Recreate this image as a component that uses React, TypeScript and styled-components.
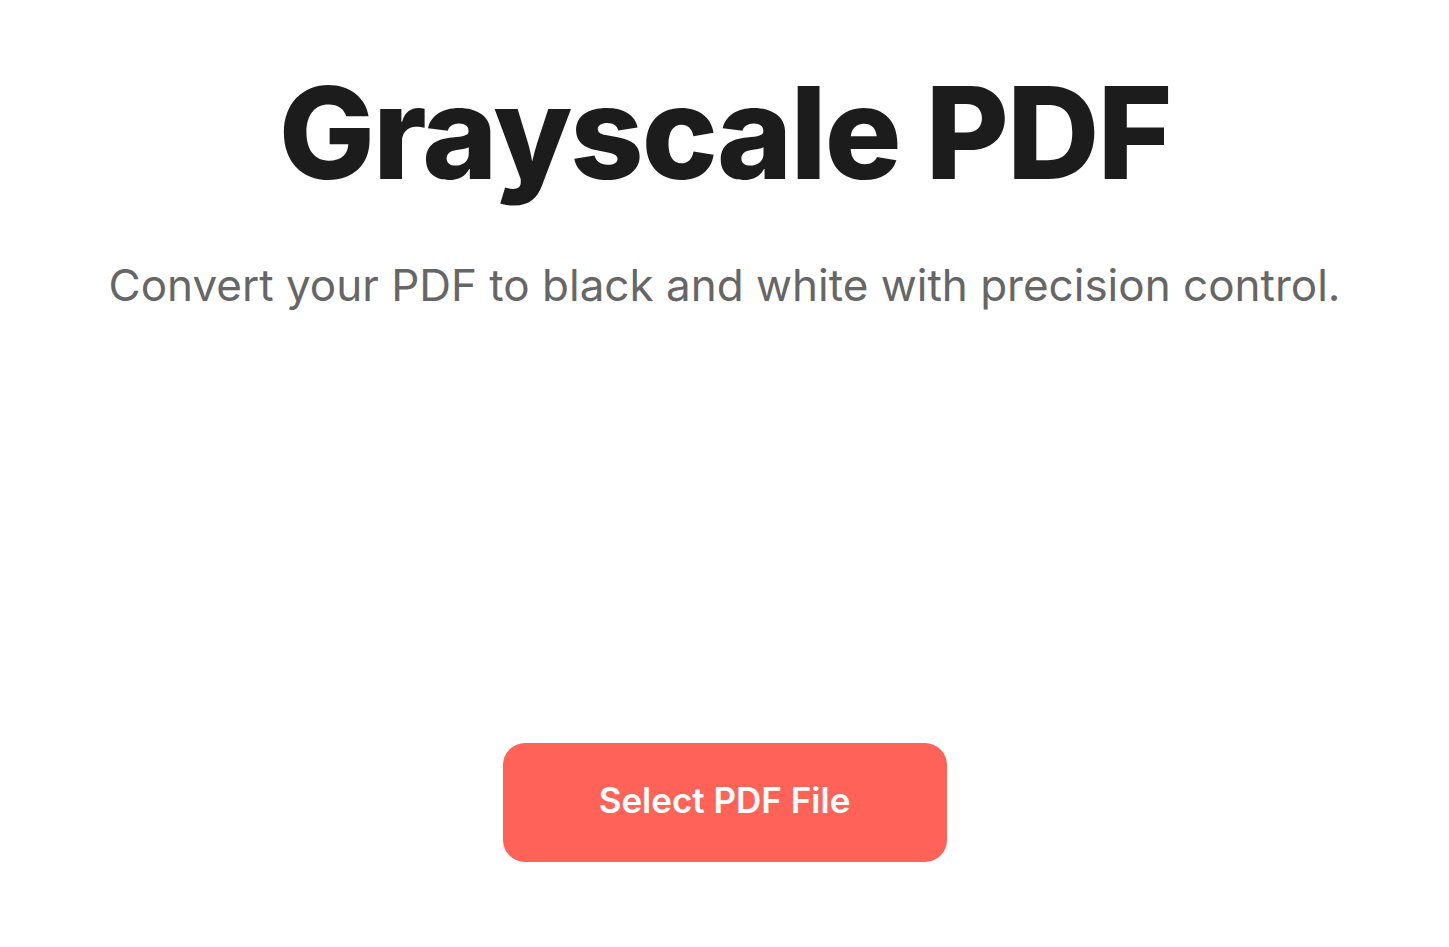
import styled, { createGlobalStyle } from "styled-components";

const GlobalStyle = createGlobalStyle`
  html, body {
    margin: 0;
    padding: 0;
    background: #ffffff;
  }

  body {
    font-family: Inter, "Noto Sans", sans-serif;
  }
`;

const Page = styled.main`
  display: flex;
  flex-direction: column;
  align-items: center;
  padding-top: 56px;
`;

const Title = styled.h1`
  margin: 0;
  font-size: 128px;
  line-height: 1.2;
  font-weight: 800;
  letter-spacing: -2px;
  color: #1c1c1c;
`;

const Subtitle = styled.p`
  margin: 49px 0 0;
  font-size: 44px;
  line-height: 1.2;
  font-weight: 400;
  color: #666666;
`;

const UploadArea = styled.section`
  display: flex;
  justify-content: center;
  margin-top: 432px;
`;

const SelectButton = styled.button`
  width: 444px;
  height: 119px;
  padding: 0 0 5px;
  border: none;
  border-radius: 22px;
  background: #ff6257;
  color: #ffffff;
  font-family: Inter, "Noto Sans", sans-serif;
  font-size: 35px;
  font-weight: 600;
  cursor: pointer;
`;

const App = () => {
  return (
    <>
      <GlobalStyle />
      <Page>
        <Title>Grayscale PDF</Title>
        <Subtitle>Convert your PDF to black and white with precision control.</Subtitle>
        <UploadArea>
          <SelectButton type="button">Select PDF File</SelectButton>
        </UploadArea>
      </Page>
    </>
  );
};

export default App;
